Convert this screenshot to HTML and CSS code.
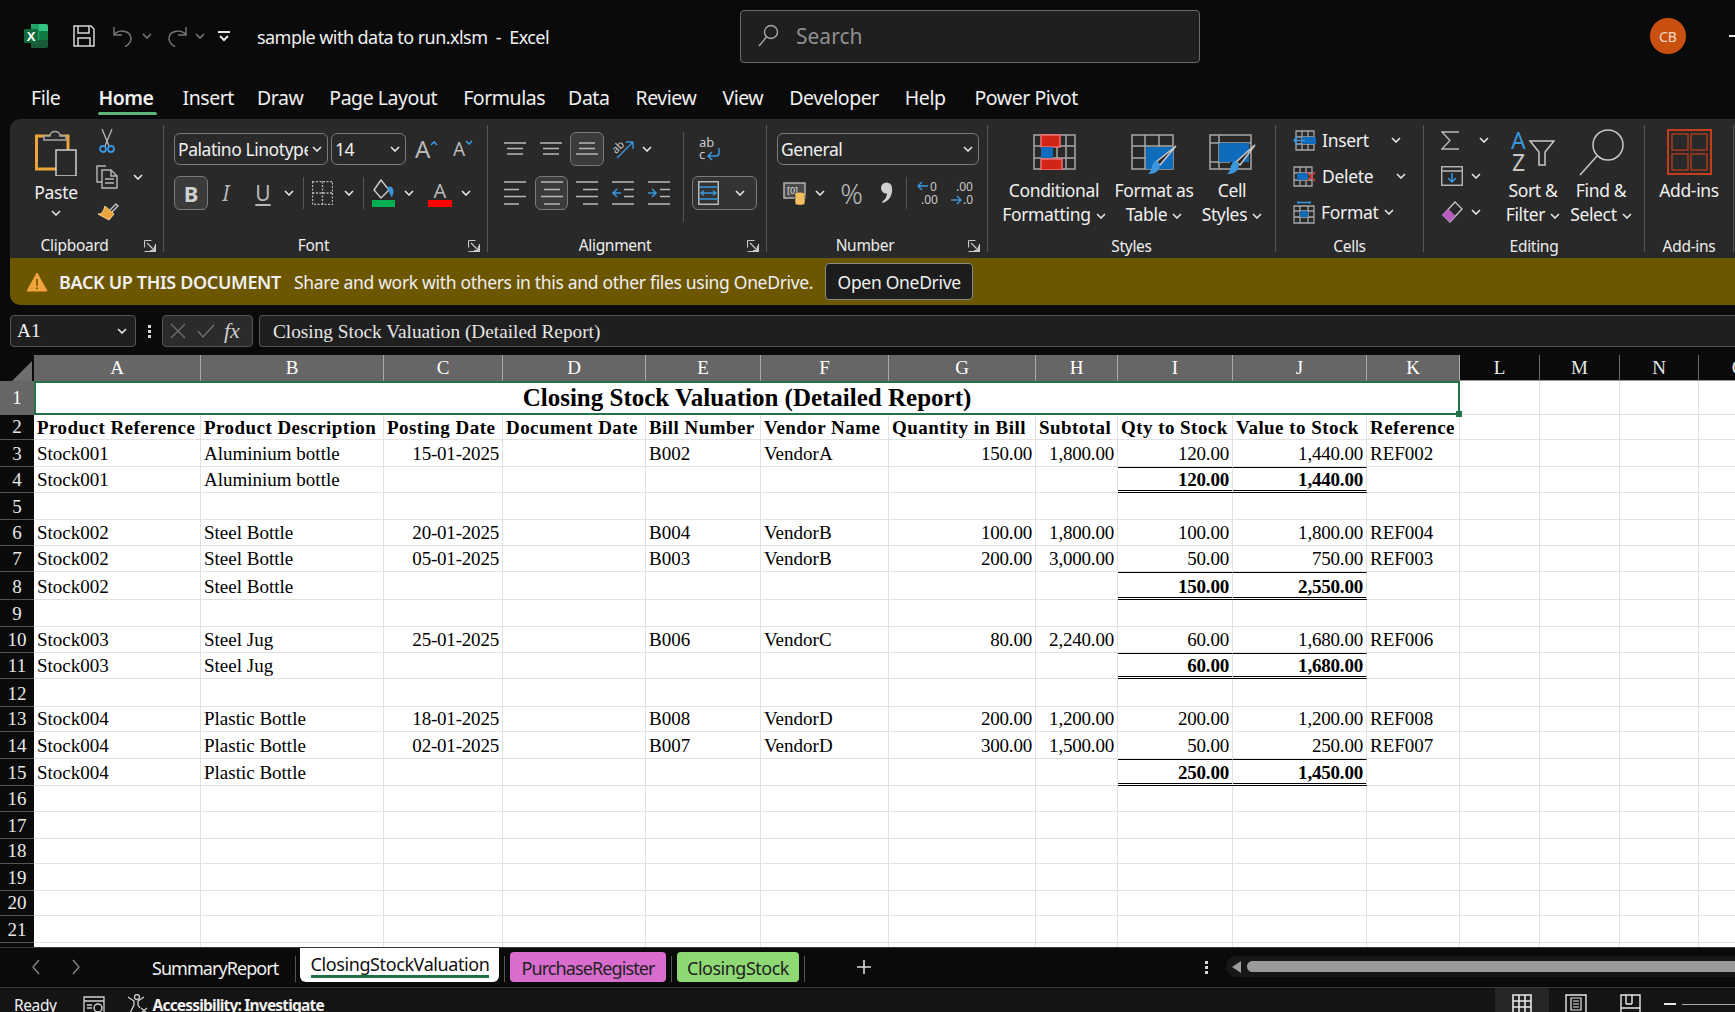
FILE: index.html
```html
<!DOCTYPE html>
<html lang="en">
<head>
    <meta charset="UTF-8">
    <meta name="viewport" content="width=device-width, initial-scale=1.0">
    <title>sample with data to run.xlsm - Excel</title>
    <link rel="stylesheet" href="styles.css">
</head>
<body>
    <svg class="defs" aria-hidden="true">
        <symbol id="chev" viewBox="0 0 10 6"><path d="M1 1l4 4 4-4" fill="none" stroke="currentColor" stroke-width="1.6"/></symbol>
        <symbol id="launch" viewBox="0 0 12 12"><path d="M.5.5h7M.5.5v7M.5 11.500h7M11.500 4v7.500H5M3 3l7.500 7.500M10.500 6v4.500H6" fill="none" stroke="#c8c8c8" stroke-width="1.2"/></symbol>
    </svg>

    <!-- title bar -->
    <div class="titlebar">
        <svg class="logo" width="24" height="24" viewBox="0 0 24 24"><path d="M7 0h15a2 2 0 0 1 2 2v5H7z" fill="#33c481"/><path d="M7 0h8v24H9a2 2 0 0 1-2-2z" fill="#21a366"/><rect x="15" y="7" width="9" height="9" fill="#107c41"/><path d="M7 16h17v6a2 2 0 0 1-2 2H9a2 2 0 0 1-2-2z" fill="#185c37"/><rect y="5" width="14" height="14" rx="1" fill="#0f6b39"/><text x="7" y="16.500" class="logo-x">X</text></svg>
        <svg class="qat-save" width="22" height="22" viewBox="0 0 22 22"><path d="M1 1h17l3 3v17H1zM5 1v7h11V1M5 21v-8h12v8" fill="none" stroke="#d6d6d6" stroke-width="1.500"/></svg>
        <svg class="qat-undo" width="20" height="22" viewBox="0 0 20 22"><path d="M1 2v8h8M1 10c4-6 16-5 17 3 .4 3-2 6-6 9" fill="none" stroke="#777" stroke-width="1.400"/></svg>
        <svg class="chev qat-c1"><use href="#chev"/></svg>
        <svg class="qat-redo" width="20" height="22" viewBox="0 0 20 22"><path d="M19 2v8h-8M19 10c-4-6-16-5-17 3-.4 3 2 6 6 9" fill="none" stroke="#777" stroke-width="1.400"/></svg>
        <svg class="chev qat-c2"><use href="#chev"/></svg>
        <svg class="qat-more" width="12" height="11" viewBox="0 0 12 11"><path d="M0 1h12" stroke="#e8e8e8" stroke-width="2"/><path d="M2 5l4 4 4-4" fill="none" stroke="#e8e8e8" stroke-width="2"/></svg>
        <span class="doc-name">sample with data to run.xlsm&nbsp; - &nbsp;Excel</span>
        <div class="search">
            <svg width="21" height="23" viewBox="0 0 21 23"><circle cx="13" cy="8" r="6.500" fill="none" stroke="#a8a8a8" stroke-width="1.400"/><path d="M8.500 13L1 22" stroke="#a8a8a8" stroke-width="1.400"/></svg>
            <span>Search</span>
        </div>
        <div class="avatar">CB</div>
        <span class="win-min"></span>
    </div>

    <!-- tabs -->
    <nav class="tabs">
        <a>File</a>
        <a class="active">Home</a>
        <a class="tab-insert">Insert</a>
        <a class="tab-draw">Draw</a>
        <a>Page Layout</a>
        <a>Formulas</a>
        <a class="tab-data">Data</a>
        <a>Review</a>
        <a>View</a>
        <a>Developer</a>
        <a>Help</a>
        <a class="tab-pivot">Power Pivot</a>
    </nav>

    <!-- ribbon -->
    <div class="ribbon">
        <section class="group g-clip">
            <div class="body clip">
                <div class="paste">
                    <svg width="42" height="46" viewBox="0 0 42 46"><path d="M15 6H1.500v33h20" fill="none" stroke="#eba53a" stroke-width="3"/><path d="M25 6h8v14" fill="none" stroke="#eba53a" stroke-width="3"/><path d="M9 10V6h6c0-6 10-6 10 0h6v4z" fill="#292929" stroke="#a8a8a8" stroke-width="1.500"/><rect x="21" y="20" width="20" height="26" fill="#292929" stroke="#d0d0d0" stroke-width="1.500"/></svg>
                    <span>Paste</span>
                    <svg class="chev"><use href="#chev"/></svg>
                </div>
                <div class="clip-small">
                    <svg class="ic-cut" width="16" height="24" viewBox="0 0 16 24"><path d="M3 0l7 17M13 0L6 17" stroke="#c0c0c0" stroke-width="1.200" fill="none"/><circle cx="4" cy="20" r="3" fill="none" stroke="#3a96dd" stroke-width="1.800"/><circle cx="12" cy="20" r="3" fill="none" stroke="#3a96dd" stroke-width="1.800"/></svg>
                    <div class="copy-row">
                        <svg width="22" height="24" viewBox="0 0 22 24"><path d="M10 1H1v16h5" fill="none" stroke="#b8b8b8" stroke-width="1.400"/><path d="M6 5h9l6 6v12H6zM15 5v6h6M9 14h9M9 18h9" fill="#292929" stroke="#b8b8b8" stroke-width="1.400"/></svg>
                        <svg class="chev ml15"><use href="#chev"/></svg>
                    </div>
                    <svg class="ic-brush" width="22" height="19" viewBox="0 0 22 19"><path d="M13 8l6-6 2 2-6 6" fill="none" stroke="#c8c8c8" stroke-width="1.400"/><path d="M8 4l9 8-5 6-11-6c4 0 5-2 7-8z" fill="#eba53a" stroke="#f1d29a"/></svg>
                </div>
            </div>
            <div class="label launch-label">Clipboard<svg class="launcher"><use href="#launch"/></svg></div>
        </section>

        <section class="group g-font">
            <div class="body stack">
                <div class="row r1 ml10">
                    <div class="select w154"><span class="clipname">Palatino Linotype</span><svg class="chev"><use href="#chev"/></svg></div>
                    <div class="select w75 ml3"><span>14</span><svg class="chev"><use href="#chev"/></svg></div>
                    <span class="grow-a ml9">A<svg class="caret" width="8" height="6" viewBox="0 0 8 6"><path d="M1 5l3-3 3 3" fill="none" stroke="#3a96dd" stroke-width="1.600"/></svg></span>
                    <span class="shrink-a ml14">A<svg class="caret" width="8" height="6" viewBox="0 0 8 6"><path d="M1 1l3 3 3-3" fill="none" stroke="#3a96dd" stroke-width="1.600"/></svg></span>
                </div>
                <div class="row r2 ml10">
                    <span class="toggled w34 bold-b">B</span>
                    <span class="ital ml9">I</span>
                    <span class="under ml17">U</span>
                    <svg class="chev ml10"><use href="#chev"/></svg>
                    <span class="vsep ml9"></span>
                    <svg class="ml8" width="21" height="24" viewBox="0 0 21 24"><path d="M.5.500h20v23H.5zM10.500.500v23M.5 12h20" fill="none" stroke="#b8b8b8" stroke-width="1.300" stroke-dasharray="2 1.500"/></svg>
                    <svg class="chev ml11"><use href="#chev"/></svg>
                    <span class="vsep ml9"></span>
                    <svg class="ml8" width="23" height="28" viewBox="0 0 23 28"><path d="M9 1L2 11l7 8 8-8z" fill="none" stroke="#d0d0d0" stroke-width="1.400"/><path d="M15 9c3-3 5-1 6 1 1 3 0 6-1 8-2-1-2-5-5-9z" fill="#3a96dd"/><rect y="21" width="23" height="7" fill="#00b050"/></svg>
                    <svg class="chev ml9"><use href="#chev"/></svg>
                    <span class="color-a ml14">A<i></i></span>
                    <svg class="chev ml9"><use href="#chev"/></svg>
                </div>
            </div>
            <div class="label launch-label">Font<svg class="launcher"><use href="#launch"/></svg></div>
        </section>

        <section class="group g-align">
            <div class="body align">
                <div class="stack w195">
                    <div class="row r1">
                        <svg class="ml16" width="22" height="14" viewBox="0 0 22 14"><path d="M0 1h22M3 6.500h16M3 12h16" stroke="#b8b8b8" stroke-width="1.500"/></svg>
                        <svg class="ml14" width="22" height="14" viewBox="0 0 22 14"><path d="M0 1h22M3 6.500h16M3 12h16" stroke="#b8b8b8" stroke-width="1.500"/></svg>
                        <span class="toggled w34 tall ml8"><svg width="22" height="14" viewBox="0 0 22 14"><path d="M3 1h16M3 6.500h16M0 12h22" stroke="#b8b8b8" stroke-width="1.500"/></svg></span>
                        <svg class="ml8" width="22" height="22" viewBox="0 0 22 22"><path d="M5 20L21 4M21 4h-7M21 4v7" fill="none" stroke="#3a96dd" stroke-width="1.400"/><text x="0" y="13" class="rot-text" transform="rotate(-45 6 10)">ab</text></svg>
                        <svg class="chev ml8"><use href="#chev"/></svg>
                    </div>
                    <div class="row r2">
                        <svg class="ml16" width="22" height="24" viewBox="0 0 22 24"><path d="M0 1h22M0 8.500h15M0 15.500h22M0 23h15" stroke="#b8b8b8" stroke-width="1.500"/></svg>
                        <span class="toggled w33 ml9"><svg width="22" height="24" viewBox="0 0 22 24"><path d="M0 1h22M3 8.500h16M0 15.500h22M3 23h16" stroke="#b8b8b8" stroke-width="1.500"/></svg></span>
                        <svg class="ml8" width="22" height="24" viewBox="0 0 22 24"><path d="M0 1h22M7 8.500h15M0 15.500h22M7 23h15" stroke="#b8b8b8" stroke-width="1.500"/></svg>
                        <svg class="ml14" width="22" height="24" viewBox="0 0 22 24"><path d="M0 1h22M12 8.500h10M12 15.500h10M0 23h22" stroke="#b8b8b8" stroke-width="1.500"/><path d="M9 12H1M5 8l-4 4 4 4" fill="none" stroke="#3a96dd" stroke-width="1.500"/></svg>
                        <svg class="ml13" width="23" height="24" viewBox="0 0 23 24"><path d="M1 1h22M13 8.500h10M13 15.500h10M1 23h22" stroke="#b8b8b8" stroke-width="1.500"/><path d="M1 12h8M5 8l4 4-4 4" fill="none" stroke="#3a96dd" stroke-width="1.500"/></svg>
                    </div>
                </div>
                <span class="vsep tallsep"></span>
                <div class="stack">
                    <div class="row r1">
                        <svg class="ml15 wrap-ic" width="21" height="24" viewBox="0 0 21 24"><text x="0" y="10" class="wrap-text">ab</text><text x="0" y="22" class="wrap-text">c</text><path d="M20 11v5c0 2-1 3-3 3H9M13 15l-4 4 4 4" fill="none" stroke="#3a96dd" stroke-width="1.500"/></svg>
                    </div>
                    <div class="row r2">
                        <span class="toggled merge ml8">
                            <svg width="21" height="24" viewBox="0 0 21 24"><rect x=".75" y=".75" width="19.500" height="22.500" fill="none" stroke="#b8b8b8" stroke-width="1.500"/><path d="M1 6h19M1 18h19" stroke="#3a96dd" stroke-width="1.500"/><path d="M3 12h15M6 9.500L3 12l3 2.500M15 9.500l3 2.500-3 2.500" fill="none" stroke="#3a96dd" stroke-width="1.300"/></svg>
                            <svg class="chev"><use href="#chev"/></svg>
                        </span>
                    </div>
                </div>
            </div>
            <div class="label launch-label">Alignment<svg class="launcher"><use href="#launch"/></svg></div>
        </section>

        <section class="group g-num">
            <div class="body stack">
                <div class="row r1 ml10">
                    <div class="select w202"><span>General</span><svg class="chev"><use href="#chev"/></svg></div>
                </div>
                <div class="row r2">
                    <svg class="ml16" width="24" height="24" viewBox="0 0 24 24"><rect x="1" y="2" width="21" height="15" fill="#4a4a4a" stroke="#b8b8b8" stroke-width="1.400"/><text x="4" y="13" class="cur-text">[0]</text><ellipse cx="17" cy="14" rx="5" ry="2.500" fill="#f0c060"/><path d="M12 14v8c0 3 10 3 10 0v-8" fill="#f0c060" stroke="#292929" stroke-width=".6"/></svg>
                    <svg class="chev ml8"><use href="#chev"/></svg>
                    <span class="pct ml15">%</span>
                    <svg class="ml19" width="13" height="22" viewBox="0 0 13 22"><circle cx="6.500" cy="6" r="5.500" fill="#d0d0d0"/><path d="M12 6c1 7-3 13-9 15l-1-1c4-3 5-6 5-10z" fill="#d0d0d0"/></svg>
                    <span class="vsep ml13"></span>
                    <svg class="ml10" width="21" height="26" viewBox="0 0 21 26"><path d="M11 6H1M5 2L1 6l4 4" fill="none" stroke="#3a96dd" stroke-width="1.400"/><text x="13" y="11" class="dec-text">0</text><text x="4" y="24" class="dec-text">.00</text></svg>
                    <svg class="ml12" width="23" height="26" viewBox="0 0 23 26"><text x="6" y="11" class="dec-text">.00</text><path d="M1 20h10M7 16l4 4-4 4" fill="none" stroke="#3a96dd" stroke-width="1.400"/><text x="13" y="24" class="dec-text">.0</text></svg>
                </div>
            </div>
            <div class="label launch-label">Number<svg class="launcher"><use href="#launch"/></svg></div>
        </section>

        <section class="group g-styles">
            <div class="body styles">
                <div class="big w108">
                    <svg width="43" height="36" viewBox="0 0 43 36"><path d="M1 1h41v34H1zM1 12h41M1 24h41M12 1v34M24 1v34M33 1v34" fill="none" stroke="#a8a8a8" stroke-width="1.500"/><rect x="8" y="1" width="19" height="12" fill="#d32418" stroke="#f07070" stroke-width="1.500"/><rect x="8" y="13" width="12" height="11" fill="#0f6cbd"/><rect x="8" y="25" width="21" height="11" fill="#d32418" stroke="#f07070" stroke-width="1.500"/></svg>
                    <span>Conditional<br>Formatting <svg class="chev inline"><use href="#chev"/></svg></span>
                </div>
                <div class="big w92">
                    <svg width="46" height="42" viewBox="0 0 46 42"><path d="M1 1h41v34H1zM1 12h41M1 24h41M14 1v34M28 1v34" fill="none" stroke="#a8a8a8" stroke-width="1.500"/><rect x="15" y="13" width="27" height="22" fill="#0f6cbd"/><path d="M45 12L29 31l-4-3z" fill="#292929" stroke="#c8c8c8" stroke-width="1.500"/><path d="M25 27c3 1 5 4 3 8-2 4-7 5-11 5 3-2 3-5 4-8 1-3 2-5 4-5z" fill="#3a96dd"/></svg>
                    <span>Format as<br>Table <svg class="chev inline"><use href="#chev"/></svg></span>
                </div>
                <div class="big w64">
                    <svg width="47" height="42" viewBox="0 0 47 42"><path d="M1 1h41v34H1zM1 9h41M10 1v34M1 28h20" fill="none" stroke="#a8a8a8" stroke-width="1.500"/><rect x="10" y="9" width="30" height="19" fill="#0f6cbd"/><path d="M46 11L31 31l-4-3z" fill="#292929" stroke="#c8c8c8" stroke-width="1.500"/><path d="M26 27c3 1 5 4 3 8-2 4-7 5-11 5 3-2 3-5 4-8 1-3 2-5 4-5z" fill="#3a96dd"/></svg>
                    <span>Cell<br>Styles <svg class="chev inline"><use href="#chev"/></svg></span>
                </div>
            </div>
            <div class="label">Styles</div>
        </section>

        <section class="group g-cells">
            <div class="body list pl17">
                <div class="item">
                    <svg width="23" height="21" viewBox="0 0 23 21"><path d="M3 1h18v19H3zM3 7h18M3 14h18M9 1v19M15 1v19" fill="none" stroke="#a8a8a8" stroke-width="1.300"/><rect x="9" y="7" width="14" height="7" fill="#0f6cbd"/><path d="M12 10.500H1M5 6l-4 4.500L5 15" fill="none" stroke="#3a96dd" stroke-width="1.500"/></svg>
                    <span class="ml6">Insert</span>
                    <svg class="chev ml22"><use href="#chev"/></svg>
                </div>
                <div class="item">
                    <svg width="23" height="21" viewBox="0 0 23 21"><path d="M1 1h18v19H1zM1 7h18M1 14h18M7 1v19M13 1v19" fill="none" stroke="#a8a8a8" stroke-width="1.300"/><rect x="4" y="7" width="11" height="7" fill="#0f6cbd"/><path d="M14 6l8 9M22 6l-8 9" stroke="#d9413a" stroke-width="1.500"/></svg>
                    <span class="ml6">Delete</span>
                    <svg class="chev ml23"><use href="#chev"/></svg>
                </div>
                <div class="item">
                    <svg width="22" height="23" viewBox="0 0 22 23"><path d="M1 5h20v17H1zM1 10h20M1 16h20M7 5v17M15 5v17" fill="none" stroke="#a8a8a8" stroke-width="1.300"/><rect x="7" y="10" width="8" height="6" fill="#0f6cbd"/><path d="M5 1.500h12M5 0v3M17 0v3" stroke="#3a96dd" stroke-width="1.300"/></svg>
                    <span class="ml6">Format</span>
                    <svg class="chev ml5"><use href="#chev"/></svg>
                </div>
            </div>
            <div class="label">Cells</div>
        </section>

        <section class="group g-edit">
            <div class="body edit">
                <div class="list pl17 w75">
                    <div class="item">
                        <svg width="18" height="19" viewBox="0 0 18 19"><path d="M18 1H1l8 8.500L1 18h17" fill="none" stroke="#b8b8b8" stroke-width="1.400"/></svg>
                        <svg class="chev ml20"><use href="#chev"/></svg>
                    </div>
                    <div class="item">
                        <svg width="22" height="20" viewBox="0 0 22 20"><rect x=".75" y=".75" width="20.500" height="18.500" fill="none" stroke="#b8b8b8" stroke-width="1.400"/><path d="M1 5h20" stroke="#b8b8b8" stroke-width="1.400"/><path d="M11 7v9M7 12l4 4 4-4" fill="none" stroke="#3a96dd" stroke-width="1.500"/></svg>
                        <svg class="chev ml8"><use href="#chev"/></svg>
                    </div>
                    <div class="item">
                        <svg width="22" height="22" viewBox="0 0 22 22"><path d="M14 1l7 7-12 13-7-7z" fill="none" stroke="#c8c8c8" stroke-width="1.300"/><path d="M7.500 8l7 7-5.500 6-8-7z" fill="#b85cc0"/></svg>
                        <svg class="chev ml8"><use href="#chev"/></svg>
                    </div>
                </div>
                <div class="big w68">
                    <svg class="sort-ic" width="44" height="44" viewBox="0 0 44 44"><text x="0" y="20" class="sort-a">A</text><text x="1" y="42" class="sort-z">Z</text><path d="M19 12h24l-9 11v13h-6V23z" fill="none" stroke="#c8c8c8" stroke-width="1.500"/></svg>
                    <span>Sort &amp;<br>Filter <svg class="chev inline"><use href="#chev"/></svg></span>
                </div>
                <div class="big w68">
                    <svg class="sort-ic" width="45" height="47" viewBox="0 0 45 47"><circle cx="29" cy="16" r="15" fill="none" stroke="#c8c8c8" stroke-width="1.500"/><path d="M18 27L1 46" stroke="#c8c8c8" stroke-width="1.500"/></svg>
                    <span>Find &amp;<br>Select <svg class="chev inline"><use href="#chev"/></svg></span>
                </div>
            </div>
            <div class="label">Editing</div>
        </section>

        <section class="group g-add">
            <div class="body addins">
                <div class="big">
                    <svg class="sort-ic" width="45" height="46" viewBox="0 0 45 46"><rect x="1" y="1" width="43" height="44" fill="none" stroke="#c43e1c" stroke-width="2"/><rect x="5" y="5" width="16" height="16" fill="none" stroke="#c43e1c" stroke-width="1.200"/><rect x="24" y="5" width="16" height="16" fill="none" stroke="#c43e1c" stroke-width="1.200"/><rect x="5" y="25" width="16" height="16" fill="none" stroke="#c43e1c" stroke-width="1.200"/><rect x="24" y="25" width="16" height="16" fill="none" stroke="#c43e1c" stroke-width="1.200"/></svg>
                    <span>Add-ins</span>
                </div>
            </div>
            <div class="label">Add-ins</div>
        </section>
    </div>

    <!-- message bar -->
    <div class="banner">
        <svg width="22" height="20" viewBox="0 0 22 20"><path d="M11 1l10 18H1z" fill="#f2a33a" stroke="#f2a33a" stroke-linejoin="round"/><path d="M11 7v7" stroke="#6d5600" stroke-width="1.600"/><circle cx="11" cy="16.300" r="1" fill="#6d5600"/></svg>
        <b>BACK UP THIS DOCUMENT</b>
        <span>Share and work with others in this and other files using OneDrive.</span>
        <button>Open OneDrive</button>
    </div>

    <!-- formula bar -->
    <div class="formula">
        <div class="namebox"><span>A1</span><svg class="chev"><use href="#chev"/></svg></div>
        <span class="fdots"><i></i><i></i><i></i></span>
        <div class="fbtns">
            <svg width="16" height="16" viewBox="0 0 16 16"><path d="M1 1l14 14M15 1L1 15" stroke="#6e6e6e" stroke-width="1.400"/></svg>
            <svg width="18" height="14" viewBox="0 0 18 14"><path d="M1 7l5 6L17 1" fill="none" stroke="#6e6e6e" stroke-width="1.400"/></svg>
            <span class="fx">fx</span>
        </div>
        <div class="finput">Closing Stock Valuation (Detailed Report)</div>
    </div>

    <!-- grid -->
    <div class="sheet">
        <table>
            <colgroup>
                <col class="c34"><col class="c167"><col class="c183"><col class="c119"><col class="c143"><col class="c115"><col class="c128"><col class="c147"><col class="c82"><col class="c115"><col class="c134"><col class="c93"><col class="c80"><col class="c80"><col class="c79"><col class="c80">
            </colgroup>
            <thead>
                <tr class="hdr">
                    <th class="corner"><svg width="20" height="20" viewBox="0 0 20 20"><path d="M20 0v20H0z" fill="#6e6e6e"/></svg></th>
                    <th class="sel">A</th><th class="sel">B</th><th class="sel">C</th><th class="sel">D</th><th class="sel">E</th><th class="sel">F</th><th class="sel">G</th><th class="sel">H</th><th class="sel">I</th><th class="sel">J</th><th class="sel">K</th><th>L</th><th>M</th><th>N</th><th>O</th>
                </tr>
            </thead>
            <tbody>
                <tr class="h34"><th class="sel">1</th><td colspan="11" class="title">Closing Stock Valuation (Detailed Report)<span class="handle"></span></td><td></td><td></td><td></td><td></td></tr>
                <tr class="h25 head"><th>2</th><td>Product Reference</td><td>Product Description</td><td>Posting Date</td><td>Document Date</td><td>Bill Number</td><td>Vendor Name</td><td>Quantity in Bill</td><td>Subtotal</td><td>Qty to Stock</td><td>Value to Stock</td><td>Reference</td><td></td><td></td><td></td><td></td></tr>
                <tr class="h27"><th>3</th><td>Stock001</td><td>Aluminium bottle</td><td class="num">15-01-2025</td><td></td><td>B002</td><td>VendorA</td><td class="num">150.00</td><td class="num">1,800.00</td><td class="num">120.00</td><td class="num">1,440.00</td><td>REF002</td><td></td><td></td><td></td><td></td></tr>
                <tr class="h26"><th>4</th><td>Stock001</td><td>Aluminium bottle</td><td></td><td></td><td></td><td></td><td></td><td></td><td class="num tot">120.00</td><td class="num tot">1,440.00</td><td></td><td></td><td></td><td></td><td></td></tr>
                <tr class="h27"><th>5</th><td></td><td></td><td></td><td></td><td></td><td></td><td></td><td></td><td></td><td></td><td></td><td></td><td></td><td></td><td></td></tr>
                <tr class="h26"><th>6</th><td>Stock002</td><td>Steel Bottle</td><td class="num">20-01-2025</td><td></td><td>B004</td><td>VendorB</td><td class="num">100.00</td><td class="num">1,800.00</td><td class="num">100.00</td><td class="num">1,800.00</td><td>REF004</td><td></td><td></td><td></td><td></td></tr>
                <tr class="h26"><th>7</th><td>Stock002</td><td>Steel Bottle</td><td class="num">05-01-2025</td><td></td><td>B003</td><td>VendorB</td><td class="num">200.00</td><td class="num">3,000.00</td><td class="num">50.00</td><td class="num">750.00</td><td>REF003</td><td></td><td></td><td></td><td></td></tr>
                <tr class="h28"><th>8</th><td>Stock002</td><td>Steel Bottle</td><td></td><td></td><td></td><td></td><td></td><td></td><td class="num tot">150.00</td><td class="num tot">2,550.00</td><td></td><td></td><td></td><td></td><td></td></tr>
                <tr class="h27"><th>9</th><td></td><td></td><td></td><td></td><td></td><td></td><td></td><td></td><td></td><td></td><td></td><td></td><td></td><td></td><td></td></tr>
                <tr class="h26"><th>10</th><td>Stock003</td><td>Steel Jug</td><td class="num">25-01-2025</td><td></td><td>B006</td><td>VendorC</td><td class="num">80.00</td><td class="num">2,240.00</td><td class="num">60.00</td><td class="num">1,680.00</td><td>REF006</td><td></td><td></td><td></td><td></td></tr>
                <tr class="h26"><th>11</th><td>Stock003</td><td>Steel Jug</td><td></td><td></td><td></td><td></td><td></td><td></td><td class="num tot">60.00</td><td class="num tot">1,680.00</td><td></td><td></td><td></td><td></td><td></td></tr>
                <tr class="h28"><th>12</th><td></td><td></td><td></td><td></td><td></td><td></td><td></td><td></td><td></td><td></td><td></td><td></td><td></td><td></td><td></td></tr>
                <tr class="h25"><th>13</th><td>Stock004</td><td>Plastic Bottle</td><td class="num">18-01-2025</td><td></td><td>B008</td><td>VendorD</td><td class="num">200.00</td><td class="num">1,200.00</td><td class="num">200.00</td><td class="num">1,200.00</td><td>REF008</td><td></td><td></td><td></td><td></td></tr>
                <tr class="h27"><th>14</th><td>Stock004</td><td>Plastic Bottle</td><td class="num">02-01-2025</td><td></td><td>B007</td><td>VendorD</td><td class="num">300.00</td><td class="num">1,500.00</td><td class="num">50.00</td><td class="num">250.00</td><td>REF007</td><td></td><td></td><td></td><td></td></tr>
                <tr class="h27"><th>15</th><td>Stock004</td><td>Plastic Bottle</td><td></td><td></td><td></td><td></td><td></td><td></td><td class="num tot">250.00</td><td class="num tot">1,450.00</td><td></td><td></td><td></td><td></td><td></td></tr>
                <tr class="h26"><th>16</th><td></td><td></td><td></td><td></td><td></td><td></td><td></td><td></td><td></td><td></td><td></td><td></td><td></td><td></td><td></td></tr>
                <tr class="h27"><th>17</th><td></td><td></td><td></td><td></td><td></td><td></td><td></td><td></td><td></td><td></td><td></td><td></td><td></td><td></td><td></td></tr>
                <tr class="h25"><th>18</th><td></td><td></td><td></td><td></td><td></td><td></td><td></td><td></td><td></td><td></td><td></td><td></td><td></td><td></td><td></td></tr>
                <tr class="h27"><th>19</th><td></td><td></td><td></td><td></td><td></td><td></td><td></td><td></td><td></td><td></td><td></td><td></td><td></td><td></td><td></td></tr>
                <tr class="h25"><th>20</th><td></td><td></td><td></td><td></td><td></td><td></td><td></td><td></td><td></td><td></td><td></td><td></td><td></td><td></td><td></td></tr>
                <tr class="h27"><th>21</th><td></td><td></td><td></td><td></td><td></td><td></td><td></td><td></td><td></td><td></td><td></td><td></td><td></td><td></td><td></td></tr>
                <tr class="h26"><th></th><td></td><td></td><td></td><td></td><td></td><td></td><td></td><td></td><td></td><td></td><td></td><td></td><td></td><td></td><td></td></tr>
            </tbody>
        </table>
    </div>

    <!-- sheet tabs -->
    <div class="sheetbar">
        <svg class="nav-l" width="10" height="16" viewBox="0 0 10 16"><path d="M8 1L2 8l6 7" fill="none" stroke="#8a8a8a" stroke-width="1.300"/></svg>
        <svg class="nav-r" width="10" height="16" viewBox="0 0 10 16"><path d="M2 1l6 7-6 7" fill="none" stroke="#8a8a8a" stroke-width="1.300"/></svg>
        <span class="stab plain">SummaryReport</span>
        <span class="tsep"></span>
        <span class="stab active"><u>ClosingStockValuation</u></span>
        <span class="tsep"></span>
        <span class="stab purple">PurchaseRegister</span>
        <span class="tsep"></span>
        <span class="stab green">ClosingStock</span>
        <span class="tsep"></span>
        <svg class="plus" width="14" height="14" viewBox="0 0 14 14"><path d="M7 0v14M0 7h14" stroke="#e0e0e0" stroke-width="1.600"/></svg>
        <span class="vdots"><i></i><i></i><i></i></span>
        <div class="hscroll">
            <svg width="9" height="12" viewBox="0 0 9 12"><path d="M9 0v12L0 6z" fill="#9b9b9b"/></svg>
            <span class="thumb"></span>
        </div>
    </div>

    <!-- status bar -->
    <footer class="status">
        <span class="ready">Ready</span>
        <svg class="st-macro" width="22" height="18" viewBox="0 0 22 18"><path d="M1 1h20v16H1zM1 5h20M4 9h5M4 12h5" fill="none" stroke="#d0d0d0" stroke-width="1.300"/><circle cx="15" cy="12" r="4" fill="none" stroke="#d0d0d0" stroke-width="1.500"/></svg>
        <svg class="st-access" width="22" height="20" viewBox="0 0 22 20"><circle cx="10" cy="3" r="2.500" fill="none" stroke="#d0d0d0" stroke-width="1.300"/><path d="M1 3l6 4v4l-4 8M17 3l-6 4v4l2 3M14 14l6 5M20 14l-6 5" fill="none" stroke="#d0d0d0" stroke-width="1.300"/></svg>
        <b>Accessibility: Investigate</b>
        <div class="views">
            <span class="view on"><svg width="20" height="20" viewBox="0 0 20 20"><path d="M1 1h18v18H1zM1 7h18M1 13h18M7 1v18M13 1v18" fill="none" stroke="#e8e8e8" stroke-width="1.600"/></svg></span>
            <span class="view"><svg width="22" height="20" viewBox="0 0 22 20"><path d="M1 1h20v18H1z" fill="none" stroke="#e8e8e8" stroke-width="1.400"/><path d="M6 4h10v12H6zM8 7h6M8 10h6M8 13h6" fill="none" stroke="#e8e8e8" stroke-width="1.200"/></svg></span>
            <span class="view"><svg width="21" height="20" viewBox="0 0 21 20"><path d="M1 1h19v18H1zM1 14h19M6 1v9M12 1v9M12 10H6" fill="none" stroke="#e8e8e8" stroke-width="1.400"/></svg></span>
        </div>
        <span class="zoom-minus"></span>
        <span class="zoom-line"></span>
    </footer>
</body>
</html>
```

FILE: styles.css
```css
*{
    margin: 0;
    padding: 0;
    box-sizing: border-box;
}

html, body{
    width: 1735px;
    height: 1012px;
    overflow: hidden;
}

body{
    background: #0a0a0a;
    color: #f0f0f0;
    font-family: "Noto Sans", sans-serif;
    font-size: 18px;
    display: flex;
    flex-direction: column;
}

.defs{
    position: absolute;
    width: 0;
    height: 0;
}

svg{
    flex: none;
    display: block;
}

.chev{
    width: 10px;
    height: 6px;
    color: #e6e6e6;
}

.chev.inline{
    display: inline-block;
    vertical-align: middle;
    margin-left: 1px;
}

/* margin helpers for the ribbon rows */
.ml3{ margin-left: 3px; }
.ml5{ margin-left: 5px; }
.ml6{ margin-left: 6px; }
.ml8{ margin-left: 8px; }
.ml9{ margin-left: 9px; }
.ml10{ margin-left: 10px; }
.ml11{ margin-left: 11px; }
.ml12{ margin-left: 12px; }
.ml13{ margin-left: 13px; }
.ml14{ margin-left: 14px; }
.ml15{ margin-left: 15px; }
.ml16{ margin-left: 16px; }
.ml17{ margin-left: 17px; }
.ml19{ margin-left: 19px; }
.ml20{ margin-left: 20px; }
.ml22{ margin-left: 22px; }
.ml23{ margin-left: 23px; }

/* title bar */
.titlebar{
    height: 72px;
    flex: none;
    display: flex;
    align-items: center;
    padding-left: 24px;
    position: relative;
}

.logo-x{
    font: bold 13px "Liberation Sans", sans-serif;
    fill: #fff;
    text-anchor: middle;
}

.qat-save{ margin-left: 25px; }
.qat-undo{ margin-left: 18px; }
.qat-c1{ margin-left: 9px; color: #777; }
.qat-redo{ margin-left: 15px; }
.qat-c2{ margin-left: 8px; color: #777; }
.qat-more{ margin-left: 13px; }

.doc-name{
    margin-left: 27px;
    font-size: 18px;
    letter-spacing: -0.55px;
    white-space: nowrap;
    padding-top: 2px;
}

.search{
    position: absolute;
    left: 740px;
    top: 10px;
    width: 460px;
    height: 53px;
    background: #1f1f1f;
    border: 1px solid #6a6a6a;
    border-radius: 4px;
    display: flex;
    align-items: center;
    padding: 0 0 2px 17px;
    gap: 17px;
    color: #8f8f8f;
    font-size: 21px;
}

.avatar{
    position: absolute;
    left: 1650px;
    top: 18px;
    width: 36px;
    height: 36px;
    border-radius: 50%;
    background: #ca5010;
    color: #f3d6c4;
    font-size: 14px;
    display: flex;
    align-items: center;
    justify-content: center;
}

.win-min{
    position: absolute;
    left: 1729px;
    top: 35px;
    width: 6px;
    height: 1.500px;
    background: #e6e6e6;
}

/* tabs */
.tabs{
    height: 47px;
    flex: none;
    display: flex;
    padding-left: 31px;
    gap: 26px;
    font-size: 19.500px;
    letter-spacing: -0.45px;
}

.tabs a{
    line-height: 52px;
    white-space: nowrap;
    position: relative;
}

.tabs .active{
    font-weight: 600;
    margin-left: 12px;
}

.tabs .tab-insert{ margin-left: 3px; }
.tabs .tab-draw{ margin-left: -3px; }
.tabs .tab-data{ margin-left: -3px; }
.tabs .tab-pivot{ margin-left: 3px; }

.tabs .active::after{
    content: "";
    position: absolute;
    left: 0;
    right: -3px;
    top: 40px;
    height: 3px;
    background: #5cb57b;
    border-radius: 2px;
}

/* ribbon */
.ribbon{
    height: 139px;
    flex: none;
    margin-left: 10px;
    background: #292929;
    border-radius: 10px 0 0 0;
    display: flex;
    padding-top: 6px;
    overflow: hidden;
}

.group{
    flex: none;
    height: 127px;
    border-right: 1px solid #555;
    display: flex;
    flex-direction: column;
    position: relative;
}

.g-clip{ width: 154px; }
.g-font{ width: 324px; }
.g-align{ width: 279px; }
.g-num{ width: 221px; }
.g-styles{ width: 288px; }
.g-cells{ width: 148px; }
.g-edit{ width: 221px; }
.g-add{ width: 89px; }

.body{
    height: 108px;
    flex: none;
}

.label{
    flex: 1;
    text-align: center;
    font-size: 15.500px;
    letter-spacing: -0.3px;
    color: #ededed;
    line-height: 24px;
    padding-top: 1px;
    position: relative;
    white-space: nowrap;
}

.launch-label{
    padding: 0 24px 0 0;
}

.launcher{
    position: absolute;
    right: 7px;
    top: 7px;
    width: 12px;
    height: 12px;
}

.stack{
    display: flex;
    flex-direction: column;
}

.row{
    display: flex;
    align-items: center;
}

.r1{
    height: 34px;
    margin-top: 7px;
}

.r2{
    height: 34px;
    margin-top: 10px;
}

.select{
    height: 32px;
    border: 1px solid #7a7a7a;
    border-radius: 6px;
    display: flex;
    align-items: center;
    justify-content: space-between;
    padding: 0 5px 0 3px;
    font-size: 17.500px;
    letter-spacing: -0.45px;
    white-space: nowrap;
}

.clipname{
    width: 130px;
    overflow: hidden;
}

.w33{ width: 33px; }
.w34{ width: 34px; }
.w64{ width: 64px; }
.w68{ width: 68px; }
.w75{ width: 75px; }
.w92{ width: 92px; }
.w108{ width: 108px; }
.w154{ width: 154px; }
.w195{ width: 195px; }
.w202{ width: 202px; }

.toggled{
    height: 34px;
    background: #3b3b3b;
    border: 1px solid #7a7a7a;
    border-radius: 6px;
    display: flex;
    align-items: center;
    justify-content: center;
    flex: none;
}

.bold-b{
    font: bold 22px "Noto Sans", sans-serif;
    color: #d0d0d0;
}

.ital{
    font: italic 21px "Noto Sans", sans-serif;
    color: #b8b8b8;
    width: 18px;
    text-align: center;
}

.under{
    font-size: 21px;
    color: #b8b8b8;
    width: 22px;
    text-align: center;
    text-decoration: underline;
    text-underline-offset: 3px;
}

.vsep{
    width: 1px;
    height: 32px;
    background: #555;
    flex: none;
}

.grow-a, .shrink-a{
    display: flex;
    align-items: flex-start;
    color: #b8b8b8;
    font-size: 24px;
    width: 22px;
    line-height: 30px;
}

.shrink-a{
    font-size: 19px;
    margin-left: 16px;
}

.caret{
    margin-top: 6px;
}

.color-a{
    width: 24px;
    text-align: center;
    color: #b8b8b8;
    font-size: 20px;
    line-height: 24px;
    position: relative;
    height: 28px;
}

.color-a i{
    position: absolute;
    left: 0;
    bottom: 0;
    width: 24px;
    height: 7px;
    background: #ff0000;
}

/* alignment */
.align{
    display: flex;
}

.tallsep{
    height: 90px;
    margin-top: 7px;
}

.rot-text{
    font: 11px "Noto Sans", sans-serif;
    fill: #c8c8c8;
}

.wrap-text{
    font: 13px "Noto Sans", sans-serif;
    fill: #c8c8c8;
}

.merge{
    width: 65px;
    justify-content: flex-start;
    gap: 16px;
    padding-left: 5px;
    background: #333;
}

/* number */
.cur-text{
    font: 9px "Noto Sans", sans-serif;
    fill: #e0e0e0;
}

.dec-text{
    font: 12px "Noto Sans", sans-serif;
    fill: #c8c8c8;
}

.pct{
    font-size: 28px;
    font-weight: 300;
    color: #b8b8b8;
    width: 21px;
    text-align: center;
    line-height: 32px;
    letter-spacing: -2px;
}

/* big buttons */
.styles, .edit, .addins{
    display: flex;
}

.styles{
    padding-left: 12px;
}

.big{
    display: flex;
    flex-direction: column;
    align-items: center;
    padding-top: 9px;
    flex: none;
    white-space: nowrap;
    position: relative;
}

.big span{
    font-size: 17.500px;
    letter-spacing: -0.35px;
    line-height: 24px;
    text-align: center;
    position: absolute;
    top: 53px;
}

.sort-ic{
    margin-top: -5px;
}

.sort-a{
    font: 23px "Noto Sans", sans-serif;
    fill: #3a96dd;
}

.sort-z{
    font: 23px "Noto Sans", sans-serif;
    fill: #c8c8c8;
}

.addins{
    justify-content: center;
}

/* small lists */
.list{
    display: flex;
    flex-direction: column;
    gap: 4px;
    margin: -1px 0 1px;
}

.pl17{
    padding-left: 17px;
    flex: none;
}

.item{
    height: 32px;
    display: flex;
    align-items: center;
    font-size: 17.500px;
    letter-spacing: -0.3px;
}

/* clipboard */
.clip{
    display: flex;
    padding-left: 28px;
}

.paste{
    width: 36px;
    display: flex;
    flex-direction: column;
    align-items: center;
    padding-top: 5px;
    font-size: 17.500px;
    letter-spacing: -0.3px;
}

.paste span{
    margin-top: 3px;
    line-height: 26px;
}

.paste .chev{
    margin-top: 5px;
}

.clip-small{
    margin-left: 23px;
    display: flex;
    flex-direction: column;
    padding-top: 4px;
}

.ic-cut{
    margin-left: 2px;
}

.copy-row{
    display: flex;
    align-items: center;
    margin-top: 12px;
    margin-left: -1px;
}

.ic-brush{
    margin-top: 13px;
}

/* message bar */
.banner{
    height: 47px;
    flex: none;
    margin-left: 10px;
    background: #6d5600;
    border-radius: 0 0 0 10px;
    display: flex;
    align-items: center;
    padding-left: 16px;
    white-space: nowrap;
    font-size: 17.500px;
}

.banner b{
    margin-left: 11px;
    font-size: 18px;
    font-weight: 600;
    letter-spacing: -0.35px;
}

.banner span{
    margin-left: 13px;
    letter-spacing: -0.32px;
}

.banner button{
    margin-left: 12px;
    width: 148px;
    height: 37px;
    background: #1c1c1c;
    color: #f0f0f0;
    border: 1px solid #8a8a8a;
    border-radius: 4px;
    font: 17.500px "Noto Sans", sans-serif;
    letter-spacing: -0.3px;
}

/* formula bar */
.formula{
    height: 32px;
    flex: none;
    margin: 10px 0 8px 10px;
    display: flex;
    align-items: stretch;
    font-family: "Liberation Serif", serif;
    font-size: 19.300px;
}

.namebox{
    width: 126px;
    background: #1f1f1f;
    border: 1px solid #555;
    border-radius: 4px;
    display: flex;
    align-items: center;
    justify-content: space-between;
    padding: 0 8px 0 6px;
}

.fdots{
    width: 26px;
    display: flex;
    flex-direction: column;
    align-items: center;
    justify-content: center;
    gap: 2px;
}

.fdots i, .vdots i{
    display: block;
    width: 3px;
    height: 3px;
    background: #d8d8d8;
}

.fbtns{
    width: 91px;
    background: #2b2b2b;
    border: 1px solid #555;
    border-radius: 4px;
    display: flex;
    align-items: center;
    padding-left: 7px;
    gap: 11px;
}

.fx{
    font: italic 22px "Liberation Serif", serif;
    color: #cfcfcf;
    margin-left: -2px;
}

.finput{
    flex: 1;
    margin-left: 6px;
    background: #1f1f1f;
    border: 1px solid #555;
    border-right: 0;
    border-radius: 4px 0 0 4px;
    padding-left: 13px;
    line-height: 31px;
    color: #e6e6e6;
}

/* grid */
.sheet{
    height: 592px;
    flex: none;
    background: #fff;
    overflow: hidden;
}

table{
    table-layout: fixed;
    border-collapse: separate;
    border-spacing: 0;
    width: 1779px;
    font-family: "Liberation Serif", serif;
    font-size: 19px;
    color: #000;
}

.c34{ width: 34px; }
.c167{ width: 167px; }
.c183{ width: 183px; }
.c119{ width: 119px; }
.c143{ width: 143px; }
.c115{ width: 115px; }
.c128{ width: 128px; }
.c147{ width: 147px; }
.c82{ width: 82px; }
.c134{ width: 134px; }
.c93{ width: 93px; }
.c80{ width: 80px; }
.c79{ width: 79px; }

.hdr{
    height: 26px;
}

.hdr th{
    background: #0a0a0a;
    color: #e8e8e8;
    font-weight: normal;
    border-right: 1px solid #6a6a6a;
    border-bottom: 1px solid #9a9a9a;
    vertical-align: bottom;
    line-height: 24px;
    padding: 0;
}

.hdr th.sel{
    background: #666;
    border-right-color: #a8a8a8;
    border-bottom-color: #666;
    color: #fff;
}

.hdr .corner{
    border: 0;
}

.corner svg{
    margin-left: 12px;
}

tbody th{
    background: #0a0a0a;
    color: #e8e8e8;
    font-weight: normal;
    border-bottom: 1px solid #555;
    padding: 0;
    vertical-align: bottom;
    line-height: 24px;
}

tbody th.sel{
    background: #666;
    color: #fff;
    vertical-align: middle;
    border-bottom-color: #666;
}

td{
    border-right: 1px solid #e1e1e1;
    border-bottom: 1px solid #e1e1e1;
    padding: 0 3px;
    white-space: nowrap;
    overflow: hidden;
    vertical-align: bottom;
    line-height: 24px;
}

.num{
    text-align: right;
    letter-spacing: -0.2px;
}

.head td{
    font-weight: bold;
    letter-spacing: 0.45px;
    line-height: 22px;
}

.tot{
    font-weight: bold;
    line-height: 20px;
    border-top: 1px solid #000;
    border-bottom: 3px double #000;
}

.title{
    position: relative;
    border: 2px solid #217346;
    overflow: visible;
    text-align: center;
    vertical-align: middle;
    font-size: 25px;
    font-weight: bold;
}

.handle{
    position: absolute;
    right: -4px;
    bottom: -4px;
    width: 6px;
    height: 6px;
    background: #217346;
}

.h25{ height: 25px; }
.h26{ height: 26px; }
.h27{ height: 27px; }
.h28{ height: 28px; }
.h34{ height: 34px; }

/* sheet tabs */
.sheetbar{
    height: 40px;
    flex: none;
    background: #0a0a0a;
    border-top: 1px solid #3a3a3a;
    display: flex;
    align-items: flex-start;
    position: relative;
}

.nav-l{ margin: 11px 0 0 31px; }
.nav-r{ margin: 11px 0 0 30px; }

.stab{
    flex: none;
    font-size: 18px;
    letter-spacing: -0.4px;
    white-space: nowrap;
    text-align: center;
}

.plain{
    margin-left: 71px;
    width: 143px;
    line-height: 40px;
    text-align: left;
    letter-spacing: -0.95px;
}

.tsep{
    width: 1px;
    height: 26px;
    margin-top: 8px;
    background: #555;
    flex: none;
}

.stab.active{
    margin: 0 5px 0 4px;
    width: 199px;
    height: 34px;
    background: #fff;
    color: #111;
    border-radius: 0 0 6px 6px;
    line-height: 32px;
}

.stab.active u{
    display: inline-block;
    text-decoration: none;
    height: 30px;
    border-bottom: 3px solid #1e7145;
    width: 178px;
}

.purple, .green{
    height: 30px;
    line-height: 32px;
    border-radius: 4px;
    color: #222;
}

.purple{
    margin: 4px 5px 0;
    width: 156px;
    background: #d86dcd;
    letter-spacing: -0.9px;
}

.green{
    margin: 4px 5px 0;
    width: 122px;
    background: #8ed973;
    letter-spacing: -0.5px;
}

.plus{
    margin: 12px 0 0 52px;
}

.vdots{
    margin: 13px 0 0 334px;
    display: flex;
    flex-direction: column;
    gap: 2px;
}

.hscroll{
    flex: 1;
    margin: 8px 0 0 18px;
    height: 21px;
    background: #171717;
    border-radius: 10px 0 0 10px;
    display: flex;
    align-items: center;
    padding-left: 6px;
}

.thumb{
    flex: 1;
    margin-left: 6px;
    height: 11px;
    background: #9b9b9b;
    border-radius: 6px 0 0 6px;
}

/* status bar */
.status{
    flex: 1;
    background: #141414;
    border-top: 1px solid #3a3a3a;
    display: flex;
    align-items: flex-start;
    font-size: 15.500px;
    line-height: 22px;
    white-space: nowrap;
    padding: 6px 0 0 14px;
    overflow: hidden;
}

.ready{
    letter-spacing: -0.4px;
}

.st-macro{ margin-left: 26px; margin-top: 2px; }
.st-access{ margin-left: 22px; }

.status b{
    margin-left: 4px;
    font-weight: 700;
    letter-spacing: -0.8px;
}

.views{
    display: flex;
    margin: -6px 7px 0 auto;
    height: 25px;
}

.view{
    width: 54px;
    height: 25px;
    display: flex;
    justify-content: center;
    padding-top: 6px;
}

.view.on{
    background: #262626;
}

.zoom-minus{
    width: 12px;
    height: 2px;
    background: #e6e6e6;
    flex: none;
    margin-top: 9px;
}

.zoom-line{
    flex: none;
    width: 53px;
    margin: 10px 0 0 6px;
    height: 1px;
    background: #aaa;
}
```
